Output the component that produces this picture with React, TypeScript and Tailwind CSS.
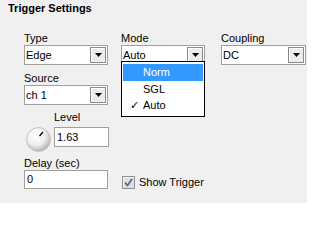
import { ReactNode } from 'react';

function ArrowButton() {
  return (
    <div className="w-[16px] h-[16px] mt-[1px] mr-[1px] border border-[#8a8a8a] bg-[#ececec] shadow-[inset_1px_1px_0_#ffffff] flex items-center justify-center">
      <svg width="7" height="4" viewBox="0 0 7 4">
        <path d="M0 0 H7 L3.5 4 Z" fill="#000" />
      </svg>
    </div>
  );
}

function DropBox({ value, width }: { value: string; width: string }) {
  return (
    <div className={`${width} h-[20px] border border-[#a0a0a0] bg-white flex items-start justify-between`}>
      <span className="pl-[1px] leading-[18px]">{value}</span>
      <ArrowButton />
    </div>
  );
}

function Field({ label, children, className = '' }: { label: string; children: ReactNode; className?: string }) {
  return (
    <div className={`flex flex-col ${className}`}>
      <span className="h-[13px]">{label}</span>
      {children}
    </div>
  );
}

function Knob() {
  return (
    <svg width="25" height="25" viewBox="0 0 25 25">
      <defs>
        <radialGradient id="kg" cx="0.4" cy="0.35" r="0.7">
          <stop offset="0" stopColor="#ffffff" />
          <stop offset="0.55" stopColor="#eeeeee" />
          <stop offset="1" stopColor="#a8a8a8" />
        </radialGradient>
      </defs>
      <circle cx="12.5" cy="12.5" r="12" fill="url(#kg)" stroke="#c4c4c4" strokeWidth="1" />
      <line x1="13.5" y1="9" x2="17" y2="5" stroke="#000" strokeWidth="1.3" />
    </svg>
  );
}

export default function App() {
  return (
    <div
      className="w-[307px] h-[203px] bg-[#f0f0f0] overflow-hidden text-[11px] leading-[13px] text-black"
      style={{ fontFamily: '"Liberation Sans", Arial, sans-serif' }}
    >
      <div className="pl-[8px] pt-[2px] font-bold">Trigger Settings</div>

      <div className="pl-[24px] mt-[17px]">
        <div className="flex">
          <Field label="Type">
            <DropBox value="Edge" width="w-[84px]" />
          </Field>

          <Field label="Mode" className="ml-[13px] relative">
            <DropBox value="Auto" width="w-[84px]" />
            <div className="absolute left-0 top-[29px] w-[84px] border border-black bg-white pt-[2px] pb-[2px] z-10">
              <div className="mx-[1px] h-[16.5px] leading-[16.5px] bg-[#3399ff] text-white pl-[20px]">Norm</div>
              <div className="mx-[1px] h-[16.5px] leading-[16.5px] pl-[20px]">SGL</div>
              <div className="mx-[1px] h-[16.5px] leading-[16.5px] pl-[20px] relative">
                <span className="absolute left-[7px] top-0">✓</span>
                Auto
              </div>
            </div>
          </Field>

          <Field label="Coupling" className="ml-[16px]">
            <DropBox value="DC" width="w-[85px]" />
          </Field>
        </div>

        <Field label="Source" className="mt-[7px]">
          <DropBox value="ch 1" width="w-[84px]" />
        </Field>

        <div className="flex mt-[6px]">
          <div className="ml-[2px] mt-[16px]">
            <Knob />
          </div>
          <Field label="Level" className="ml-[3px]">
            <span className="h-[3px]" />
            <div className="w-[55px] h-[20px] border border-[#a0a0a0] bg-white pl-[2px] leading-[18px]">1.63</div>
          </Field>
        </div>

        <div className="flex items-end mt-[5px]">
          <Field label="Delay (sec)">
            <div className="w-[84px] h-[19px] border border-[#a0a0a0] bg-white pl-[2px] leading-[17px]">0</div>
          </Field>
          <div className="flex items-center ml-[14px] h-[13px]">
            <div className="w-[13px] h-[13px] border border-[#8e8f8f] bg-[#dedede] shadow-[inset_1px_1px_0_#f4f4f4] flex items-center justify-center">
              <svg width="9" height="9" viewBox="0 0 9 9">
                <path d="M1 4.5 L3.5 7.5 L8 1" fill="none" stroke="#4a5f97" strokeWidth="1.6" />
              </svg>
            </div>
            <span className="ml-[4px] leading-[13px]">Show Trigger</span>
          </div>
        </div>
      </div>
    </div>
  );
}
